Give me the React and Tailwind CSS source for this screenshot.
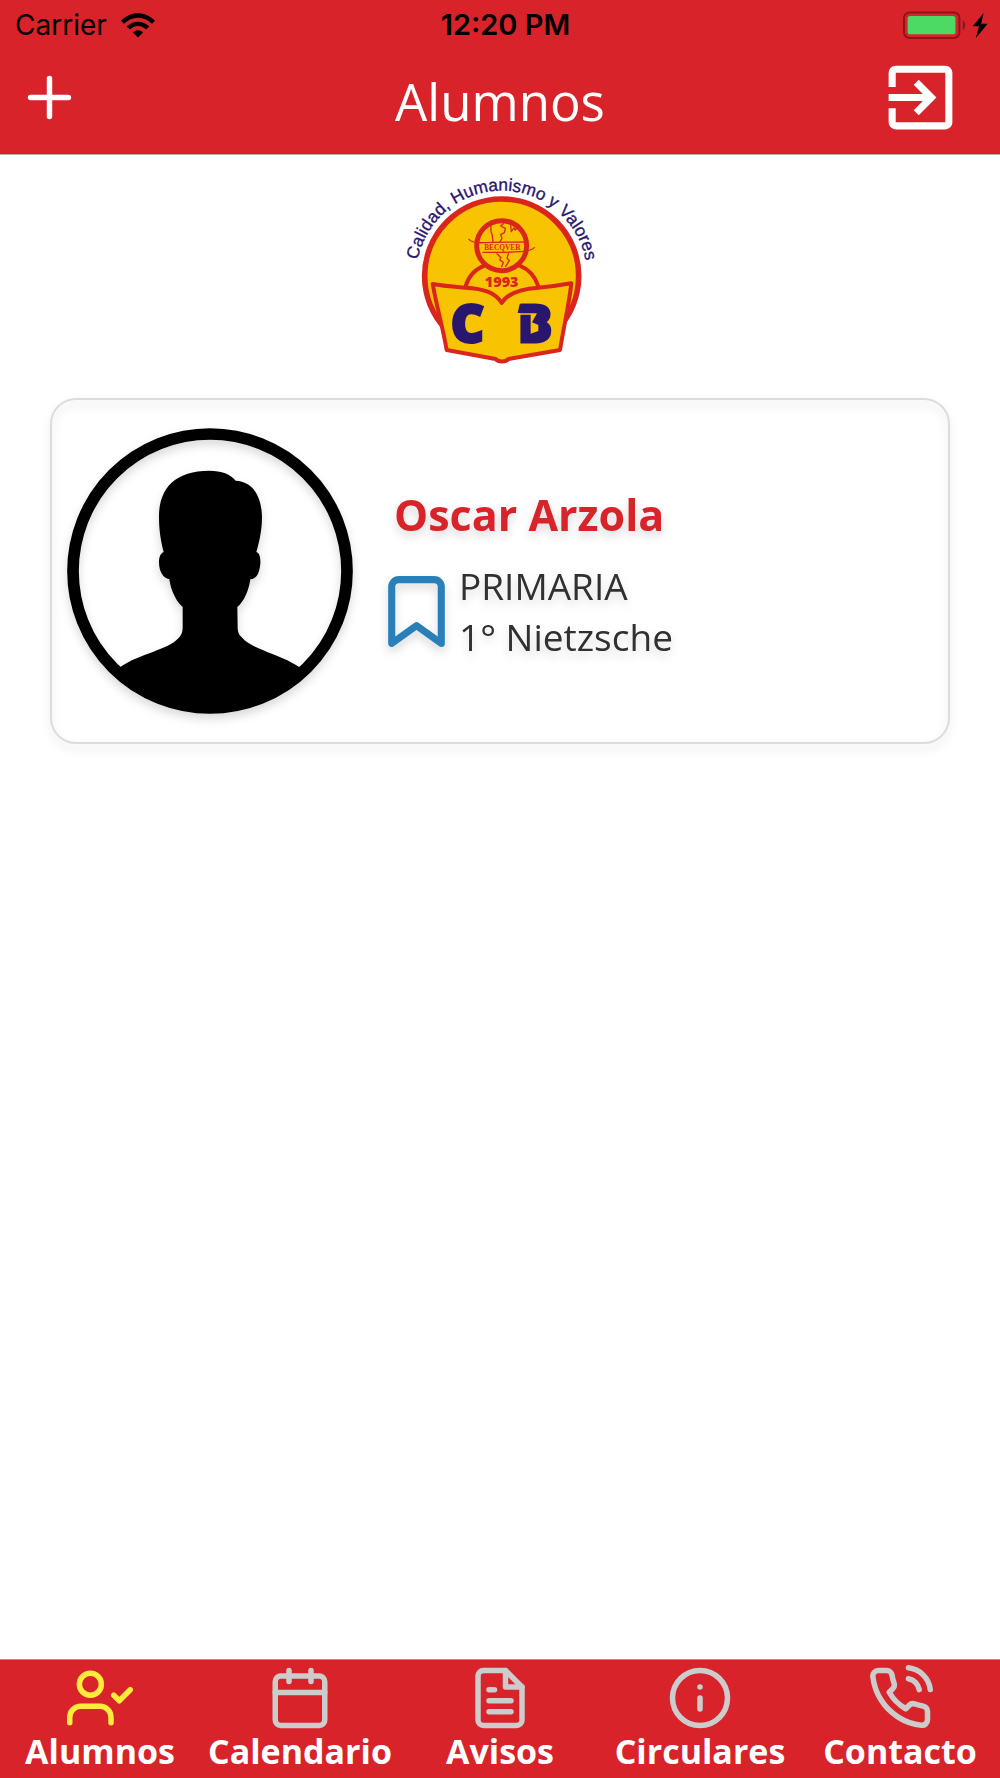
import { FiBookmark, FiCalendar, FiFileText, FiInfo, FiPhoneCall, FiPlus, FiUserCheck } from "react-icons/fi";
import { MdExitToApp } from "react-icons/md";

const tabs = [
  { label: "Alumnos", icon: FiUserCheck, active: true },
  { label: "Calendario", icon: FiCalendar },
  { label: "Avisos", icon: FiFileText },
  { label: "Circulares", icon: FiInfo },
  { label: "Contacto", icon: FiPhoneCall },
];

function WifiIcon() {
  return (
    <svg viewBox="0 0 102 74" className="w-[34px] h-[25px]" fill="currentColor">
      <path d="M0 23C29 -7 73 -7 102 23L93 32C69 8 33 8 9 32Z" />
      <path d="M17 40C37 21 65 21 85 40L75 49C60 35 42 35 27 49Z" />
      <path d="M36 58C45 49 57 49 66 58L51 73Z" />
    </svg>
  );
}

function BatteryIcon() {
  return (
    <svg viewBox="0 0 256 84" className="w-[85px] h-[28px]">
      <rect x="3" y="4" width="167" height="77" rx="17" fill="none" stroke="#8a161c" strokeWidth="6" />
      <rect x="14" y="15" width="144" height="55" rx="8" fill="#4cd964" />
      <path d="M180 28C190 34 190 52 180 58Z" fill="#8a161c" />
      <path d="M243 6L210 46H229L219 82L255 38H235Z" fill="#000" />
    </svg>
  );
}

function StatusBar() {
  return (
    <div className="grid grid-cols-3 items-center h-[50px] pl-[15px] pr-3 text-black text-[28px] leading-[32px] font-['Inter',sans-serif]">
      <div className="flex items-center gap-[14px]">
        <span>Carrier</span>
        <WifiIcon />
      </div>
      <span className="text-center text-[29px] font-semibold pl-2">12:20 PM</span>
      <div className="flex justify-end">
        <BatteryIcon />
      </div>
    </div>
  );
}

function SchoolLogo() {
  return (
    <svg viewBox="0 0 630 630" className="w-[210px] h-[210px]" role="img" aria-label="Colegio Becquer">
      <defs>
        <path id="motto" d="M64 333A256 256 0 0 1 576 333" />
      </defs>
      <text fill="#29166f" stroke="#29166f" strokeWidth="1" fontSize="52" fontFamily="Liberation Sans, Arial, sans-serif">
        <textPath href="#motto" startOffset="48">Calidad, Humanismo y Valores</textPath>
      </text>
      <circle cx="320" cy="333" r="231" fill="#f8c300" stroke="#da251c" strokeWidth="17" />
      <g fill="none" stroke="#da251c" strokeLinecap="round" strokeLinejoin="round">
        <path d="M212 364C220 335 240 313 268 302M430 364C420 333 402 313 374 302" strokeWidth="12" />
        <circle cx="320" cy="242" r="75" fill="#f8c300" strokeWidth="15" />
        <g strokeWidth="4">
          <path d="M222 223C230 233 250 234 270 233C310 230 350 232 392 231" />
          <path d="M418 248C408 259 392 259 375 260C335 263 300 262 264 262" />
          <path d="M287 181C290 192 284 198 291 207L294 231M325 176L317 183L331 190L328 203L317 209L321 220L315 231" />
          <path d="M347 180L349 200L356 189L361 195L367 188" />
          <path d="M306 266L318 278L314 285L325 292L320 305M340 266L336 280L343 287L332 304" />
        </g>
      </g>
      <text x="322" y="255" textAnchor="middle" fill="#da251c" fontSize="22" fontWeight="700" fontFamily="Liberation Serif, serif">
        BECQVER
      </text>
      <path
        d="M113 357C150 364 180 365 212 368C265 371 300 382 320 414C340 382 380 371 430 368C465 365 495 361 529 355C522 420 507 480 495 555L340 582C332 592 310 592 302 582L155 555C142 480 126 430 113 357Z"
        fill="#f8c300"
        stroke="#da251c"
        strokeWidth="12"
        strokeLinejoin="round"
      />
      <text x="320" y="366" textAnchor="middle" fill="#da251c" fontSize="43" fontWeight="800" fontFamily="Open Sans, sans-serif">
        1993
      </text>
      <g fill="#29166f" stroke="#29166f" strokeWidth="9" fontSize="152" fontWeight="800" fontFamily="Open Sans, sans-serif">
        <text x="168" y="531">C</text>
        <text x="369" y="530">B</text>
      </g>
      <path d="M374 418H405V444H368ZM400 440H438V512H400Z" fill="#29166f" />
      <path d="M366 445H426L411 472L430 480V498L407 506V449H366Z" fill="#f8c300" />
    </svg>
  );
}

function Avatar() {
  return (
    <svg viewBox="81 114 858 858" className="w-[286px] h-[286px] shrink-0" role="img" aria-label="Foto del alumno">
      <circle cx="510" cy="543" r="411" fill="none" stroke="#000" strokeWidth="35" />
      <path d="M508 242C545 242 572 252 587 272C640 275 665 320 666 380C666 420 658 455 649 486C660 490 662 505 661 522C658 550 650 567 631 568C627 600 612 635 592 651L593 715C594 730 598 735 608 745C640 780 715 790 779 832L810 846A429 429 0 0 1 210 846L240 832C300 790 385 780 415 745C426 733 428 725 428 710V651C410 637 392 600 388 568C370 565 357 545 357 517C357 500 362 490 371 486C362 450 357 420 357 380C357 290 410 242 508 242Z" />
    </svg>
  );
}

function StudentCard({ name, level, group }) {
  return (
    <article className="flex items-center mx-[50px] mt-[23px] px-[15px] py-7 border-2 border-[#dcdcdc] rounded-[26px] drop-shadow-[0_5px_5px_rgba(0,0,0,0.15)]">
      <Avatar />
      <div className="ml-[21px] pt-[6px]">
        <h2 className="pl-5 mb-4 text-[43px] leading-[58px] font-bold text-[#d8232a]">{name}</h2>
        <div className="flex items-center">
          <FiBookmark className="w-[85px] h-[85px] shrink-0 text-[#2980b9]" />
          <p className="text-[37px] leading-[51px] text-[#303030]">
            {level}
            <br />
            {group}
          </p>
        </div>
      </div>
    </article>
  );
}

export default function App() {
  return (
    <div className="flex flex-col min-h-screen bg-white font-['Open_Sans',sans-serif]">
      <header className="bg-[#d8232a] border-b border-[#b2b2b2] pb-[10px]">
        <StatusBar />
        <div className="grid grid-cols-3 items-center h-[94px] pl-[17px] pr-[37px] text-white">
          <button type="button" aria-label="Agregar" className="justify-self-start">
            <FiPlus className="w-[65px] h-[65px]" />
          </button>
          <h1 className="pt-2 pl-5 text-center text-[51px] leading-[70px]">Alumnos</h1>
          <button type="button" aria-label="Salir" className="justify-self-end">
            <MdExitToApp className="w-[85px] h-[85px]" />
          </button>
        </div>
      </header>

      <main className="flex-1">
        <div className="flex justify-center pt-[10px]">
          <SchoolLogo />
        </div>
        <StudentCard name="Oscar Arzola" level="PRIMARIA" group="1° Nietzsche" />
      </main>

      <nav className="grid grid-cols-5 bg-[#d8232a] border-t border-[#c0888a] pt-[5px] pb-[7px]">
        {tabs.map((tab) => {
          const Icon = tab.icon;
          return (
            <a key={tab.label} href="#" className="flex flex-col items-center text-white">
              <Icon className={`w-[66px] h-[66px] ${tab.active ? "text-[#ffeb3b]" : "text-[#cccccc]"}`} />
              <span className="text-[34px] leading-[40px] font-bold">{tab.label}</span>
            </a>
          );
        })}
      </nav>
    </div>
  );
}
